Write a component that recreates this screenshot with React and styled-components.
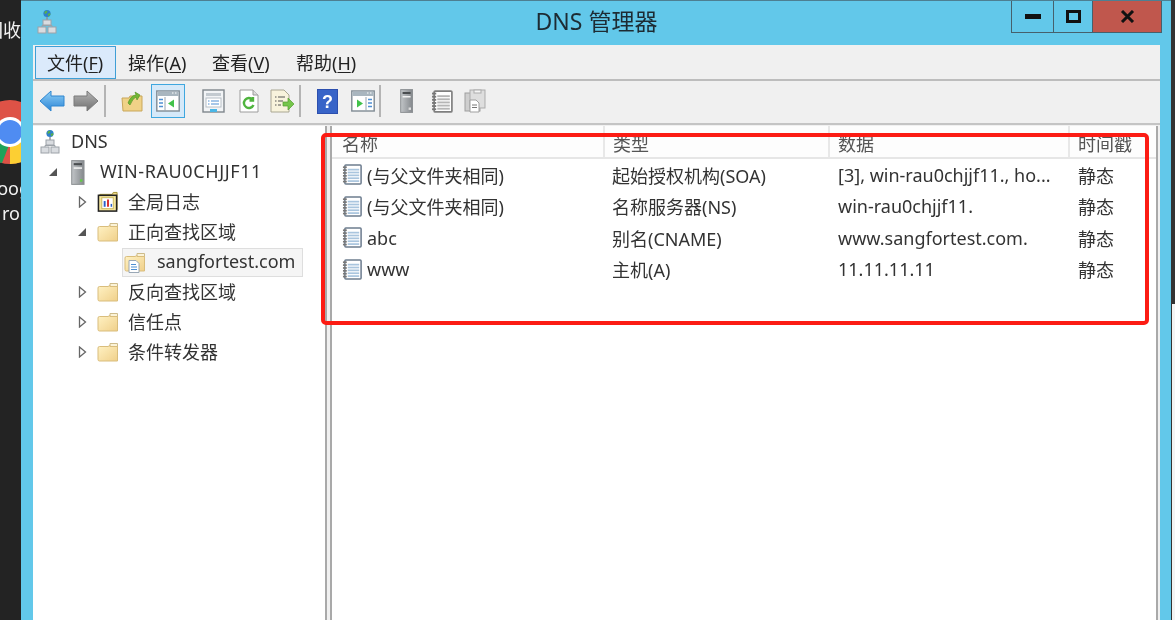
import React from "react";
import styled, { createGlobalStyle } from "styled-components";

const Global = createGlobalStyle`
  html, body { margin: 0; padding: 0; background: #222; }
  body { font-family: "Noto Sans", "Noto Sans CJK SC", sans-serif; }
`;

const Page = styled.div`
  position: relative; width: 1175px; height: 620px; overflow: hidden;
  display: flex; background: #232323; filter: blur(0.45px);
`;
const Desktop = styled.div`
  width: 21px; flex: none; background: #232323; overflow: hidden; position: relative;
  display: flex; flex-direction: column; align-items: flex-end;
  color: #f2f2f2; font-size: 18px; white-space: nowrap;
`;
const DeskLabel = styled.div`
  height: 24px; line-height: 24px; margin-top: ${p => p.$top}px; margin-right: ${p => p.$mr || 0}px; flex: none;
`;
const ChromeBox = styled.div`
  flex: none; margin-top: 58px; margin-right: -21px; width: 64px; height: 64px;
`;
const RightEdge = styled.div`
  width: 4px; flex: none; display: flex; flex-direction: column; background: #333;
`;
const RightLower = styled.div`
  margin-top: 304px; flex: 1; margin-left: 1px; background: #f4f4f4;
`;
const Win = styled.div`
  flex: 1; min-width: 0; display: flex; flex-direction: column;
  background: #62c8ea; border-top: 1px solid #4d7f92; padding: 0 11px 0 12px;
`;
const TitleBar = styled.div`
  height: 44px; flex: none; display: flex; align-items: flex-start;
`;
const TitleIcon = styled.div`
  width: 30px; height: 44px; display: flex; align-items: center; justify-content: center; flex: none;
  margin-left: -1px; margin-top: -1px;
`;
const Title = styled.div`
  flex: 1; text-align: center; font-size: 23px; line-height: 41px; color: #1d2b33; padding-left: 120px;
`;
const Controls = styled.div`
  display: flex; flex: none; margin-right: -2px; height: 31px; border: 1.5px solid #46606c; border-top: 0;
`;
const Ctl = styled.div`
  width: ${p => p.$w}px; display: flex; align-items: center; justify-content: center;
  background: ${p => p.$close ? "#c0574d" : "transparent"};
  border-left: ${p => p.$first ? "0" : "1.5px solid #46606c"};
`;
const Client = styled.div`
  flex: 1; min-height: 0; background: #f0f0f0; display: flex; flex-direction: column;
`;
const MenuBar = styled.div`
  height: 34px; flex: none; display: flex; align-items: center; border-bottom: 2px solid #bdbdbd;
  padding-left: 2px; font-size: 18px; color: #222;
`;
const MenuItem = styled.div`
  width: ${p => p.$w}px; height: 33px; box-sizing: border-box; flex: none; display: flex; align-items: center;
  padding-left: ${p => p.$active ? 11 : 12}px;
  ${p => p.$active ? "background:#dbeafb;border:1.5px solid #3f9fd6;" : ""}
`;
const MenuKey = styled.span`
  text-decoration: underline; text-underline-offset: 2px;
`;
const Toolbar = styled.div`
  height: 40px; flex: none; display: flex; align-items: center; padding: 0 0 2px 2px; box-sizing: content-box;
  border-bottom: 2px solid #c4c4c4;
  margin-bottom: -2px;
`;
const ToolBtn = styled.div`
  width: ${p => p.$w || 34}px; height: 34px; flex: none; box-sizing: border-box;
  margin-left: ${p => p.$ml || 0}px; display: flex; align-items: center; justify-content: center;
  ${p => p.$on ? "background:#d5e9f9;border:1.5px solid #3fa7df;" : ""}
`;
const ToolSep = styled.div`
  width: 2px; height: 32px; background: #b4b4b4; flex: none; margin: 0 1px;
  margin-left: ${p => p.$ml ?? 1}px;
`;
const Panes = styled.div`
  flex: 1; min-height: 0; display: flex; margin-top: 3px;
`;
const TreePane = styled.div`
  width: 292px; flex: none; background: #fff; border-right: 2px solid #a9a9a9; padding-top: 1px; font-size: 18px; color: #333;
`;
const TreeRow = styled.div`
  height: 30px; display: flex; align-items: center; padding-left: ${p => p.$pad}px;
`;
const Twist = styled.div`
  width: 14px; height: 14px; flex: none; display: flex; align-items: center; justify-content: center;
`;
const RowIcon = styled.div`
  width: 22px; height: 24px; flex: none; display: flex; align-items: center; justify-content: center; margin-left: ${p => p.$ml || 0}px;
`;
const TreeLabel = styled.span`
  margin-left: ${p => p.$ml || 9}px; padding-bottom: 2px; white-space: nowrap; letter-spacing: ${p => p.$ls || 0}px;
`;
const Selected = styled.div`
  height: 29px; width: 181px; box-sizing: border-box; display: flex; align-items: center; background: #f5f5f5; border: 1px solid #dedede; padding-left: 1px;
`;
const ListPane = styled.div`
  flex: 1; min-width: 0; margin: 0 2px 0 3px; background: #fff;
  border-left: 2px solid #a9a9a9; border-right: 2px solid #a9a9a9;
  font-size: 18px; color: #333;
`;
const Cols = styled.div`
  display: grid; grid-template-columns: 271px 225px 240px 1fr;
`;
const Head = styled(Cols)`
  height: 33px; box-sizing: border-box; border-bottom: 2px solid #e6e6e6; background: #fdfdfd; color: #555;
`;
const HeadCell = styled.div`
  padding: 3px 0 0 10px; display: flex; align-items: center; white-space: nowrap;
  box-shadow: inset 2px 0 0 ${p => p.$first ? "transparent" : "#e8e8e8"};
`;
const Row = styled(Cols)`
  height: 31.5px; align-items: center;
`;
const Cell = styled.div`
  padding-left: ${p => p.$pad || 10}px; display: flex; align-items: center; white-space: nowrap; gap: 4px;
`;
const Highlight = styled.div`
  position: absolute; left: 321px; top: 133px; width: 828px; height: 192px; box-sizing: border-box;
  border: 4.5px solid #fc1c14; border-radius: 5px; pointer-events: none;
`;

const Globe = ({ x, y }) => (
  <g>
    <circle cx={x} cy={y} r="3.6" fill="#2f7fcb" />
    <path d={`M${x - 2.6} ${y - 1.5}q2 -2 3 -1l-.5 2-2 1zM${x + .5} ${y + .5}l2.5 -1 .5 1.5-2 2z`} fill="#59b04a" />
  </g>
);
const DnsIcon = () => (
  <svg width="20" height="26" viewBox="0 0 20 26">
    <Globe x={10} y={4.5} />
    <path d="M10 8v4" stroke="#8a9097" strokeWidth="1.4" />
    <rect x="6" y="11" width="8" height="5" fill="#d9dce0" stroke="#9ca2a8" />
    <rect x="1" y="18" width="8" height="6" fill="#d9dce0" stroke="#9ca2a8" />
    <rect x="11" y="18" width="8" height="6" fill="#d9dce0" stroke="#9ca2a8" />
    <path d="M5 18v-1.5h10V18" fill="none" stroke="#9ca2a8" />
  </svg>
);
const ServerIcon = ({ h = 24, gray }) => (
  <svg width={h * .55} height={h} viewBox="0 0 13 24">
    <defs>
      <linearGradient id="srv" x1="0" x2="1" y1="0" y2="0">
        <stop offset="0" stopColor="#c2c5c8" /><stop offset="1" stopColor="#84888c" />
      </linearGradient>
    </defs>
    <rect x=".6" y=".6" width="11.800" height="22.800" fill="url(#srv)" stroke="#8d9194" />
    <rect x="2.500" y="3" width="8" height="2" fill="#4a4d50" />
    <rect x="2.500" y="7" width="8" height="1.500" fill="#f2f2f2" />
    <rect x="8.500" y="18.500" width="2.400" height="2.400" fill={gray ? "#ddd" : "#65c94a"} />
  </svg>
);
const Folder = ({ children, w = 22, h = 21 }) => (
  <svg width={w} height={h} viewBox="0 0 22 20">
    <defs>
      <linearGradient id="fld" x1="0" x2="1" y1="0" y2="1">
        <stop offset="0" stopColor="#fff2c4" /><stop offset="1" stopColor="#f0d08a" />
      </linearGradient>
    </defs>
    <path d="M13 1h7.500V6H13z" fill="#fbf3d8" stroke="#cdbb8a" />
    <path d="M1 5.500q0 -1.500 1.500 -1.500H11l2 -1v1h7.500v14.500H2.500Q1 18.500 1 17z" fill="url(#fld)" stroke="#d9bd7c" />
    {children}
  </svg>
);
const LogFolder = () => (
  <svg width="23" height="22" viewBox="0 0 23 22">
    <path d="M3 3h13l1-2h4v18H3z" fill="#f1da8b" stroke="#a2902f" />
    <rect x="1.500" y="4" width="19" height="16.500" fill="#f6e79d" stroke="#222" strokeWidth="1.600" />
    <rect x="5" y="6.500" width="12" height="11.500" fill="#fff" stroke="#c9b65c" />
    <path d="M8 16V10" stroke="#2a5fc9" strokeWidth="2" /><path d="M11.500 16V8.500" stroke="#d62a2a" strokeWidth="2" /><path d="M15 16v-3" stroke="#2a5fc9" strokeWidth="1.500" />
  </svg>
);
const ZoneIcon = () => (
  <Folder>
    <path d="M5 8h7l3 3v9H5z" fill="#fff" stroke="#9aa8b6" />
    <path d="M7 12h5M7 14.500h6M7 17h6" stroke="#4f8fd2" strokeWidth="1.200" />
  </Folder>
);
const BookIcon = ({ size = 22, gray }) => (
  <svg width={size} height={size} viewBox="0 0 22 22">
    <rect x="3" y="1" width="17" height="20" rx="1" fill="#fff" stroke={gray ? "#7f7f7f" : "#6d7d8f"} strokeWidth="1.600" />
    {[5, 8, 11, 14, 17].map(y => (
      <rect key={y} x="6" y={y} width="12" height="1.800" fill={gray ? "#b5b5b5" : "#a9c5de"} />
    ))}
    {[3.500, 6.500, 9.500, 12.500, 15.500, 18.500].map(y => (
      <rect key={y} x="1" y={y - 1} width="4" height="1.800" fill="#777" />
    ))}
  </svg>
);
const ArrowOpen = () => (
  <svg width="10" height="10" viewBox="0 0 10 10"><path d="M9 1v8H1z" fill="#555" /></svg>
);
const ArrowClosed = () => (
  <svg width="9" height="12" viewBox="0 0 9 12"><path d="M1.500 1l6 5-6 5z" fill="#fff" stroke="#666" strokeWidth="1.300" /></svg>
);
const NavArrow = ({ left, gray }) => (
  <svg width="26" height="24" viewBox="0 0 26 24">
    <defs>
      <linearGradient id={gray ? "ag" : "ab"} x1="0" x2="0" y1="0" y2="1">
        <stop offset="0" stopColor={gray ? "#b5b5b5" : "#8fd0f6"} /><stop offset="1" stopColor={gray ? "#6f6f6f" : "#2b84d6"} />
      </linearGradient>
    </defs>
    <path transform={left ? undefined : "matrix(-1 0 0 1 26 0)"} d="M1 12L12 2v5h13v10H12v5z" fill={`url(#${gray ? "ag" : "ab"})`} stroke={gray ? "#7b7b7b" : "#2f86d0"} />
  </svg>
);
const UpFolder = () => (
  <svg width="22" height="24" viewBox="0 0 22 24">
    <path d="M1 9h7l1-2h12v15H2z" fill="#f0d287" stroke="#c9a75a" />
    <path d="M7 14q3 -8 8 -8l-1-3 5 3-3 5-1-3q-3 1-6 8z" fill="#73b733" stroke="#4f8f21" strokeWidth=".6" />
  </svg>
);
const PaneIcon = ({ right }) => (
  <svg width="24" height="22" viewBox="0 0 24 22">
    <rect x=".800" y="1" width="22.400" height="20" fill="#fff" stroke="#7f8a93" strokeWidth="1.400" />
    <rect x="1.500" y="1.500" width="21" height="4.500" fill="#a9b6bf" />
    <path d="M16 3h1.500M19 3h1.500" stroke="#fff" />
    {right ? (<>
      <path d="M6 9.500l6 4-6 4z" fill="#42c24a" />
      <path d="M15 7v14" stroke="#9aa6b0" />
      <path d="M17 9.500h4M17 13h4M17 16.500h4" stroke="#4f8fd2" strokeWidth="1.600" />
    </>) : (<>
      <path d="M9 7v14" stroke="#9aa6b0" />
      <path d="M3 9.500h4M3 13h4M3 16.500h4" stroke="#4f8fd2" strokeWidth="1.600" />
      <path d="M18 9.500l-6 4 6 4z" fill="#42c24a" />
    </>)}
  </svg>
);
const PropsIcon = () => (
  <svg width="23" height="24" viewBox="0 0 23 24">
    <rect x="1" y="1" width="21" height="22" fill="#f2f4f6" stroke="#7f868c" strokeWidth="1.400" />
    <rect x="4" y="4" width="15" height="3" fill="#c3cad0" />
    <rect x="4" y="9" width="15" height="9" fill="#fff" stroke="#b6bec5" />
    <path d="M6 12h1.500M9 12h8M6 15h1.500M9 15h8" stroke="#4f8fd2" />
    <rect x="8" y="20" width="7" height="3" fill="#4ab6e6" />
  </svg>
);
const RefreshIcon = () => (
  <svg width="20" height="24" viewBox="0 0 20 24">
    <path d="M1 1h13l5 5v17H1z" fill="#fff" stroke="#9c9c9c" />
    <path d="M14 1v5h5" fill="#ddd" stroke="#9c9c9c" />
    <path d="M14.500 16a5 5 0 1 1-1-5.500M14 8v3.500h-3.500" fill="none" stroke="#4fb43e" strokeWidth="2.400" />
  </svg>
);
const ExportIcon = () => (
  <svg width="25" height="24" viewBox="0 0 25 24">
    <path d="M1 1h13l5 5v17H1z" fill="#f8f3dc" stroke="#a9a692" />
    <path d="M5 8h1.500M8 8h7M5 12h1.500M8 12h5M5 16h1.500M8 16h3" stroke="#555" />
    <path d="M13 13h5v-4l6 6-6 6v-4h-5z" fill="#75c64a" stroke="#549c32" strokeWidth=".7" />
  </svg>
);
const HelpIcon = () => (
  <svg width="21" height="25" viewBox="0 0 21 25">
    <rect width="21" height="25" fill="#2c4fae" />
    <rect x="1" y="1" width="19" height="23" fill="#3864c8" />
    <text x="10.500" y="19" textAnchor="middle" fontSize="18" fontWeight="700" fontFamily="Liberation Sans, sans-serif" fill="#fff">?</text>
  </svg>
);
const CopyIcon = () => (
  <svg width="22" height="24" viewBox="0 0 22 24">
    <rect x="1" y="4" width="15" height="18" fill="#cfcfcf" stroke="#9f9f9f" />
    <rect x="6" y="1" width="15" height="18" fill="#dedede" stroke="#ababab" />
    <rect x="10" y="1" width="7" height="3" fill="#f5f5f5" stroke="#ababab" />
    <path d="M6 11h6l3 3v9H6z" fill="#fff" stroke="#9f9f9f" />
    <path d="M8 16h5M8 18.500h5" stroke="#777" />
  </svg>
);
const ChromeLogo = () => (
  <svg width="64" height="64" viewBox="0 0 64 64">
    <circle cx="32" cy="32" r="32" fill="#de5246" />
    <path d="M32 32L60 16A32 32 0 0 1 32 64z" fill="#fccf33" />
    <path d="M4 16A32 32 0 0 0 24 63l11-28z" fill="#1fa25a" />
    <circle cx="32" cy="32" r="15" fill="#fff" />
    <circle cx="32" cy="32" r="12" fill="#4f8cf2" />
  </svg>
);

const menus = [
  ["文件", "F", 81, true],
  ["操作", "A", 84],
  ["查看", "V", 84],
  ["帮助", "H", 84],
];
const records = [
  ["(与父文件夹相同)", "起始授权机构(SOA)", "[3], win-rau0chjjf11., ho..."],
  ["(与父文件夹相同)", "名称服务器(NS)", "win-rau0chjjf11."],
  ["abc", "别名(CNAME)", "www.sangfortest.com."],
  ["www", "主机(A)", "11.11.11.11"],
];
const tools = [
  { el: <NavArrow left />, },
  { el: <NavArrow gray /> },
  { sep: true },
  { el: <UpFolder />, ml: 8 },
  { el: <PaneIcon />, ml: 2, on: true },
  { el: <PropsIcon />, ml: 11 },
  { el: <RefreshIcon />, ml: 2, w: 33 },
  { el: <ExportIcon /> },
  { sep: true, sml: 0 },
  { el: <HelpIcon />, ml: 8 },
  { el: <PaneIcon right />, ml: 2, w: 33 },
  { sep: true, sml: 0 },
  { el: <ServerIcon h={24} gray />, ml: 8 },
  { el: <BookIcon size={23} gray />, ml: 2, w: 32 },
  { el: <CopyIcon />, ml: 1, w: 32 },
];
const closedFolders = ["反向查找区域", "信任点", "条件转发器"];

export default function App() {
  return (
    <Page>
      <Global />
      <Desktop>
        <DeskLabel $top={18}>回收</DeskLabel>
        <ChromeBox><ChromeLogo /></ChromeBox>
        <DeskLabel $top={12} $mr={-9}>oog</DeskLabel>
        <DeskLabel $top={1} $mr={1}>ro</DeskLabel>
      </Desktop>
      <Win>
        <TitleBar>
          <TitleIcon><DnsIcon /></TitleIcon>
          <Title>DNS 管理器</Title>
          <Controls>
            <Ctl $w={41} $first>
              <svg width="16" height="5"><rect width="16" height="5" fill="#111" /></svg>
            </Ctl>
            <Ctl $w={38}>
              <svg width="15" height="13"><rect x="1.500" y="1.500" width="12" height="10" fill="none" stroke="#111" strokeWidth="3" /></svg>
            </Ctl>
            <Ctl $w={68} $close>
              <svg width="15" height="13" viewBox="0 0 15 13"><path d="M2 1l11 11M13 1L2 12" stroke="#111" strokeWidth="3" /></svg>
            </Ctl>
          </Controls>
        </TitleBar>
        <Client>
          <MenuBar>
            {menus.map(([label, key, w, active]) => (
              <MenuItem key={key} $w={w} $active={active}>
                <span>{label}(<MenuKey>{key}</MenuKey>)</span>
              </MenuItem>
            ))}
          </MenuBar>
          <Toolbar>
            {tools.map((t, i) => t.sep
              ? <ToolSep key={i} $ml={t.sml} />
              : <ToolBtn key={i} $ml={t.ml} $w={t.w} $on={t.on}>{t.el}</ToolBtn>)}
          </Toolbar>
          <Panes>
            <TreePane>
              <TreeRow $pad={7}><RowIcon $ml={-1}><DnsIcon /></RowIcon><TreeLabel $ml={10}>DNS</TreeLabel></TreeRow>
              <TreeRow $pad={13}><Twist><ArrowOpen /></Twist><RowIcon $ml={7}><ServerIcon h={25} /></RowIcon><TreeLabel $ml={11} $ls={0.6}>WIN-RAU0CHJJF11</TreeLabel></TreeRow>
              <TreeRow $pad={42}><Twist><ArrowClosed /></Twist><RowIcon $ml={8}><LogFolder /></RowIcon><TreeLabel>全局日志</TreeLabel></TreeRow>
              <TreeRow $pad={42}><Twist><ArrowOpen /></Twist><RowIcon $ml={8}><Folder /></RowIcon><TreeLabel>正向查找区域</TreeLabel></TreeRow>
              <TreeRow $pad={89}>
                <Selected><RowIcon><ZoneIcon /></RowIcon><TreeLabel $ml={11}>sangfortest.com</TreeLabel></Selected>
              </TreeRow>
              {closedFolders.map(n => (
                <TreeRow $pad={42} key={n}><Twist><ArrowClosed /></Twist><RowIcon $ml={8}><Folder /></RowIcon><TreeLabel>{n}</TreeLabel></TreeRow>
              ))}
            </TreePane>
            <ListPane>
              <Head>
                <HeadCell $first>名称</HeadCell>
                <HeadCell>类型</HeadCell>
                <HeadCell>数据</HeadCell>
                <HeadCell>时间戳</HeadCell>
              </Head>
              {records.map((r, i) => (
                <Row key={i}>
                  <Cell><BookIcon size={21} />{r[0]}</Cell>
                  <Cell $pad={9}>{r[1]}</Cell>
                  <Cell>{r[2]}</Cell>
                  <Cell>静态</Cell>
                </Row>
              ))}
            </ListPane>
          </Panes>
        </Client>
      </Win>
      <RightEdge><RightLower /></RightEdge>
      <Highlight />
    </Page>
  );
}
